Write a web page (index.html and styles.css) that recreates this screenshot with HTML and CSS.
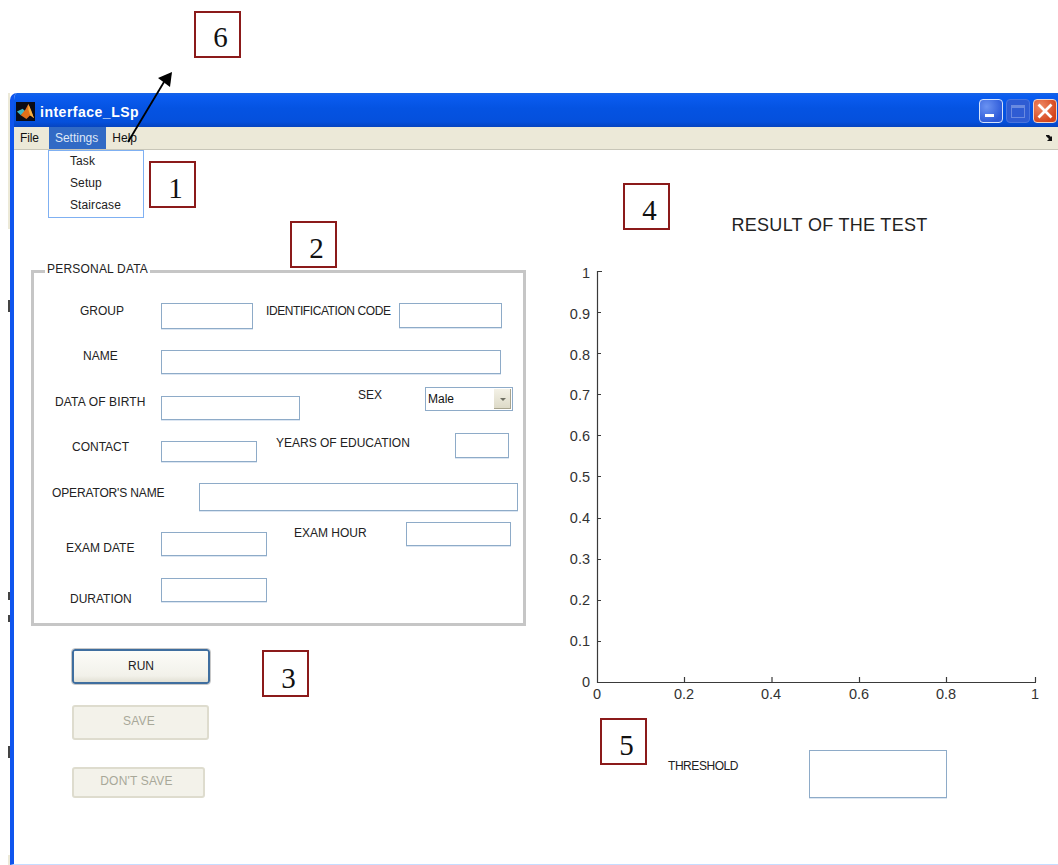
FILE: index.html
```html
<!DOCTYPE html>
<html lang="en">
<head>
<meta charset="utf-8">
<title>interface_LSp</title>
<link rel="stylesheet" href="styles.css">
</head>
<body>
<div class="page">
  <section class="window">
    <header class="titlebar">
      <svg class="app-icon" viewBox="0 0 20 20" aria-hidden="true">
        <rect width="20" height="20" fill="#0b0b14"/>
        <path d="M1 10 L7 7 L10 10 L5 14 Z" fill="#3fb6c4"/>
        <path d="M5 14 L10 8 L13 2 L19 17 L15 14 L11 18 Z" fill="#e0701a"/>
        <path d="M13 2 L16 9 L19 17 L15 14 L13 8 Z" fill="#f5b040"/>
      </svg>
      <span class="title">interface_LSp</span>
      <div class="controls">
        <span class="ctl ctl-min"><i class="min-bar"></i></span>
        <span class="ctl ctl-max"><i class="max-box"></i></span>
        <span class="ctl ctl-close">
          <svg viewBox="0 0 24 24" aria-hidden="true"><path d="M6 6 L18 18 M18 6 L6 18" stroke="#fff" stroke-width="3" stroke-linecap="square"/></svg>
        </span>
      </div>
    </header>
    <nav class="menubar">
      <span class="menu menu-file">File</span>
      <span class="menu menu-open">Settings</span>
      <span class="menu">Help</span>
      <svg class="dock" viewBox="0 0 9 8" aria-hidden="true"><path d="M0 1 H3 L5 3 L6 2 V7 H1 L3 5 L0 2 Z" fill="#111"/></svg>
    </nav>
    <main class="canvas">
      <ul class="dropdown">
        <li>Task</li>
        <li>Setup</li>
        <li>Staircase</li>
      </ul>

      <fieldset class="panel">
        <legend>PERSONAL DATA</legend>
      </fieldset>

      <label class="lbl l-group">GROUP</label>
      <input class="box f-group" type="text">
      <label class="lbl l-id">IDENTIFICATION CODE</label>
      <input class="box f-id" type="text">
      <label class="lbl l-name">NAME</label>
      <input class="box f-name" type="text">
      <label class="lbl l-dob">DATA OF BIRTH</label>
      <input class="box f-dob" type="text">
      <label class="lbl l-sex">SEX</label>
      <div class="select"><span>Male</span><b class="select-btn"><i></i></b></div>
      <label class="lbl l-contact">CONTACT</label>
      <input class="box f-contact" type="text">
      <label class="lbl l-years">YEARS OF EDUCATION</label>
      <input class="box f-years" type="text">
      <label class="lbl l-oper">OPERATOR'S NAME</label>
      <input class="box f-oper" type="text">
      <label class="lbl l-date">EXAM DATE</label>
      <input class="box f-date" type="text">
      <label class="lbl l-hour">EXAM HOUR</label>
      <input class="box f-hour" type="text">
      <label class="lbl l-dur">DURATION</label>
      <input class="box f-dur" type="text">

      <button class="btn btn-run" type="button">RUN</button>
      <button class="btn btn-off btn-save" type="button">SAVE</button>
      <button class="btn btn-off btn-dont" type="button">DON'T SAVE</button>

      <svg class="chart" viewBox="0 0 520 480" aria-label="Result of the test">
        <text class="chart-title" x="279.5" y="23" text-anchor="middle">RESULT OF THE TEST</text>
        <g class="axis">
          <path d="M47.5 63 V474.5 H486"/>
          <path d="M47.5 63.5 H52 M47.5 104.5 H51 M47.5 145.5 H51 M47.5 186.5 H51 M47.5 227.5 H51 M47.5 268.5 H51 M47.5 310.5 H51 M47.5 351.5 H51 M47.5 392.5 H51 M47.5 433.5 H51"/>
          <path d="M134.5 474 V469 M222 474 V469 M309.5 474 V469 M396.5 474 V469 M485.5 474 V469"/>
        </g>
        <g class="ticks-y" text-anchor="end">
          <text x="40" y="69.5">1</text>
          <text x="40" y="110.5">0.9</text>
          <text x="40" y="151.5">0.8</text>
          <text x="40" y="192">0.7</text>
          <text x="40" y="233">0.6</text>
          <text x="40" y="274">0.5</text>
          <text x="40" y="315">0.4</text>
          <text x="40" y="356">0.3</text>
          <text x="40" y="397">0.2</text>
          <text x="40" y="438">0.1</text>
          <text x="40" y="478.5">0</text>
        </g>
      </svg>
      <div class="ticks-x">
        <span>0</span><span>0.2</span><span>0.4</span><span>0.6</span><span>0.8</span><span>1</span>
      </div>

      <label class="lbl l-thresh">THRESHOLD</label>
      <input class="box f-thresh" type="text">
    </main>
  </section>

  <i class="edge edge-strip"></i>
  <i class="edge edge-foot"></i>
  <i class="edge edge-a"></i>
  <i class="edge edge-b"></i>
  <i class="edge edge-c"></i>
  <i class="edge edge-d"></i>

  <!-- numbered callouts on top of the window -->
  <div class="tag tag-1">1</div>
  <div class="tag tag-2">2</div>
  <div class="tag tag-3">3</div>
  <div class="tag tag-4">4</div>
  <div class="tag tag-5">5</div>
  <div class="tag tag-6">6</div>

  <svg class="arrow" viewBox="0 0 60 90" aria-hidden="true">
    <path d="M4 76 L40 16" stroke="#000" stroke-width="1.8" fill="none"/>
    <path d="M48 6 L46 21 L34 12 Z" fill="#000"/>
  </svg>
</div>
</body>
</html>
```
FILE: styles.css
```css
* { box-sizing: border-box; }

html, body {
  margin: 0;
  padding: 0;
  background: #fff;
}

body {
  width: 1058px;
  height: 865px;
  overflow: hidden;
  font-family: "Liberation Sans", Arial, sans-serif;
  color: #111;
}

.page {
  position: relative;
  width: 1058px;
  height: 865px;
  overflow: hidden;
  padding: 93px 0 0 10px;
}

/* ---------- window frame ---------- */
.window {
  display: flex;
  flex-direction: column;
  width: 1048px;
  height: 772px;
  background: #fff;
  border-left: 4px solid #0f55ee;
  border-bottom: 1px solid #c6dcff;
  border-radius: 7px 0 0 0;
  overflow: hidden;
}

.titlebar {
  flex: 0 0 34px;
  display: flex;
  align-items: center;
  padding: 0 1px 0 2px;
  background: linear-gradient(#1763e6 0, #0a5cf0 10%, #0553e2 45%, #0550dc 85%, #0644c0 100%);
}

.app-icon {
  width: 19px;
  height: 19px;
  margin-top: 2px;
}

.title {
  margin-left: 5px;
  margin-top: 3px;
  font-size: 14px;
  font-weight: 700;
  letter-spacing: 0.5px;
  color: #fff;
}

.controls {
  margin-left: auto;
  display: flex;
  gap: 3px;
  margin-top: 2px;
}

.ctl {
  position: relative;
  display: flex;
  align-items: center;
  justify-content: center;
  width: 24px;
  height: 24px;
  border: 1px solid #d5e2fb;
  border-radius: 4px;
  background: radial-gradient(circle at 30% 30%, #6b93f2, #2c59d8 75%);
}

.ctl-max {
  border-color: #4a74dd;
  background: #2f5cd3;
}

.ctl-close {
  background: radial-gradient(circle at 30% 30%, #ee8a66, #d5451c 75%);
  border-color: #f1d6c8;
}

.ctl-close svg {
  width: 22px;
  height: 22px;
}

.min-bar {
  position: absolute;
  left: 5px;
  bottom: 5px;
  width: 9px;
  height: 3px;
  background: #fff;
}

.max-box {
  width: 14px;
  height: 13px;
  border: 1px solid #6a8ae0;
  border-top-width: 3px;
}

.menubar {
  flex: 0 0 23px;
  display: flex;
  align-items: stretch;
  padding-left: 1px;
  background: #ece9d8;
  border-bottom: 1px solid #c8c6b8;
  font-size: 12px;
}

.menu {
  display: flex;
  align-items: center;
  padding: 0 6px;
  color: #111;
}

.menu-file {
  padding: 0 5px 0 5px;
  letter-spacing: -0.1px;
}

.menu-open {
  margin-left: 5px;
  padding: 0 8px 0 6px;
  background: #316ac5;
  color: #dfe8f6;
}

.dock {
  width: 9px;
  height: 8px;
  margin: 7px 3px 0 auto;
}

/* ---------- widget canvas: origin is the window client area ---------- */
.canvas {
  position: relative;
  flex: 1;
}

.dropdown {
  position: absolute;
  left: 34px;
  top: 0;
  width: 96px;
  height: 68px;
  margin: 0;
  padding: 0 0 0 21px;
  list-style: none;
  background: #fff;
  border: 1px solid #7fb0f2;
  font-size: 12px;
  letter-spacing: 0.1px;
  color: #222;
}

.dropdown li {
  height: 22px;
  line-height: 20px;
}

.panel {
  position: absolute;
  left: 17px;
  top: 112px;
  width: 495px;
  height: 364px;
  margin: 0;
  padding: 0;
  border: 3px solid #c6c6c6;
}

.panel legend {
  margin-left: 11px;
  padding: 0 2px 5px;
  font-size: 12px;
  line-height: 14px;
  letter-spacing: 0.2px;
  color: #222;
}

.lbl {
  position: absolute;
  font-size: 12px;
  line-height: 14px;
  white-space: nowrap;
  color: #222;
}

.box {
  position: absolute;
  margin: 0;
  padding: 0;
  background: #fff;
  border: 1px solid #8eabc8;
  border-radius: 0;
  outline: none;
  box-shadow: 0 1px 0 #dce6f2;
}

.l-group   { left: 66px;  top: 154px; }
.f-group   { left: 147px; top: 153px; width: 92px;  height: 26px; }
.l-id      { left: 252px; top: 154px; letter-spacing: -0.42px; }
.f-id      { left: 385px; top: 153px; width: 103px; height: 25px; }
.l-name    { left: 69px;  top: 199px; }
.f-name    { left: 147px; top: 200px; width: 340px; height: 24px; }
.l-dob     { left: 41px;  top: 245px; letter-spacing: 0.15px; }
.f-dob     { left: 147px; top: 246px; width: 139px; height: 24px; }
.l-sex     { left: 344px; top: 238px; }
.l-contact { left: 58px;  top: 290px; }
.f-contact { left: 147px; top: 291px; width: 96px;  height: 21px; }
.l-years   { left: 262px; top: 286px; }
.f-years   { left: 441px; top: 283px; width: 54px;  height: 25px; }
.l-oper    { left: 38px;  top: 336px; letter-spacing: -0.14px; }
.f-oper    { left: 185px; top: 333px; width: 319px; height: 28px; }
.l-date    { left: 52px;  top: 391px; }
.f-date    { left: 147px; top: 382px; width: 106px; height: 24px; }
.l-hour    { left: 280px; top: 376px; }
.f-hour    { left: 392px; top: 372px; width: 105px; height: 24px; }
.l-dur     { left: 56px;  top: 442px; }
.f-dur     { left: 147px; top: 428px; width: 106px; height: 24px; }
.l-thresh  { left: 654px; top: 609px; letter-spacing: -0.44px; }
.f-thresh  { left: 795px; top: 600px; width: 138px; height: 48px; }

.select {
  position: absolute;
  left: 411px;
  top: 237px;
  width: 88px;
  height: 24px;
  display: flex;
  align-items: center;
  padding-left: 2px;
  background: #fff;
  border: 1px solid #8eabc8;
  font-size: 12px;
}

.select span { flex: 1; }

.select-btn {
  display: flex;
  align-items: center;
  justify-content: center;
  width: 17px;
  height: 20px;
  margin-right: 1px;
  background: linear-gradient(#f3f1e6, #dcd9c6);
  box-shadow: inset -1px -1px 0 #a8a48e;
}

.select-btn i {
  width: 0;
  height: 0;
  border-left: 3px solid transparent;
  border-right: 3px solid transparent;
  border-top: 3px solid #6f6f62;
}

.btn {
  position: absolute;
  left: 58px;
  margin: 0;
  padding: 0;
  font-family: inherit;
  font-size: 12px;
  border-radius: 3px;
}

.btn-run {
  top: 499px;
  width: 138px;
  height: 35px;
  padding-bottom: 2px;
  color: #222;
  border: 2px solid #3f6e9f;
  background: linear-gradient(#fcfcf8, #f2f1ea 80%, #e2e0d4);
  outline: 1px solid #c8c8c8;
}

.btn-off {
  color: #a8a899;
  border: 2px solid #dedcce;
  background: #f3f2ea;
  letter-spacing: 0.2px;
}

.btn-save {
  top: 555px;
  width: 137px;
  height: 35px;
  padding: 0 3px 3px 0;
}

.btn-dont {
  top: 617px;
  width: 133px;
  height: 31px;
  padding: 0 4px 3px 0;
}

/* ---------- result axes ---------- */
.chart {
  position: absolute;
  left: 536px;
  top: 58px;
  width: 520px;
  height: 480px;
  overflow: visible;
}

.chart-title {
  font-size: 18px;
  fill: #222;
  letter-spacing: 0.3px;
}

.axis path {
  fill: none;
  stroke: #3a3a3a;
  stroke-width: 1.2;
}

.ticks-y text {
  font-size: 14.5px;
  fill: #333;
}

.ticks-x {
  position: absolute;
  left: 583px;
  top: 536px;
  width: 439px;
  height: 16px;
  font-size: 14.5px;
  line-height: 16px;
  color: #333;
}

.ticks-x span {
  position: absolute;
  transform: translateX(-50%);
}

.ticks-x span:nth-child(1) { left: 0; }
.ticks-x span:nth-child(2) { left: 87px; }
.ticks-x span:nth-child(3) { left: 174px; }
.ticks-x span:nth-child(4) { left: 262px; }
.ticks-x span:nth-child(5) { left: 349px; }
.ticks-x span:nth-child(6) { left: 438px; }

/* ---------- callouts over the window ---------- */
.tag {
  position: absolute;
  display: flex;
  align-items: center;
  justify-content: center;
  width: 47px;
  height: 47px;
  padding: 7px 0 0 6px;
  background: #fff;
  border: 2px solid #8b1a1a;
  font-family: "Liberation Serif", "Times New Roman", serif;
  font-size: 29px;
  line-height: 1;
  color: #111;
}

.tag-1 { left: 149px; top: 161px; }
.tag-2 { left: 290px; top: 221px; }
.tag-3 { left: 262px; top: 650px; padding-top: 10px; }
.tag-4 { left: 623px; top: 183px; }
.tag-5 { left: 600px; top: 718px; }
.tag-6 { left: 194px; top: 11px; padding-top: 5px; }

.arrow {
  position: absolute;
  left: 124px;
  top: 66px;
  width: 60px;
  height: 90px;
}

/* scraps of the window behind, along the left margin */
.edge {
  position: absolute;
  left: 8px;
  width: 2px;
  background: #444;
}

.edge-strip { top: 93px; height: 136px; background: #ece9d8; }
.edge-foot  { top: 855px; height: 10px; background: #ece9d8; }
.edge-a { top: 300px; height: 12px; }
.edge-b { top: 592px; height: 8px; }
.edge-c { top: 615px; height: 7px; }
.edge-d { top: 746px; height: 12px; }
```
